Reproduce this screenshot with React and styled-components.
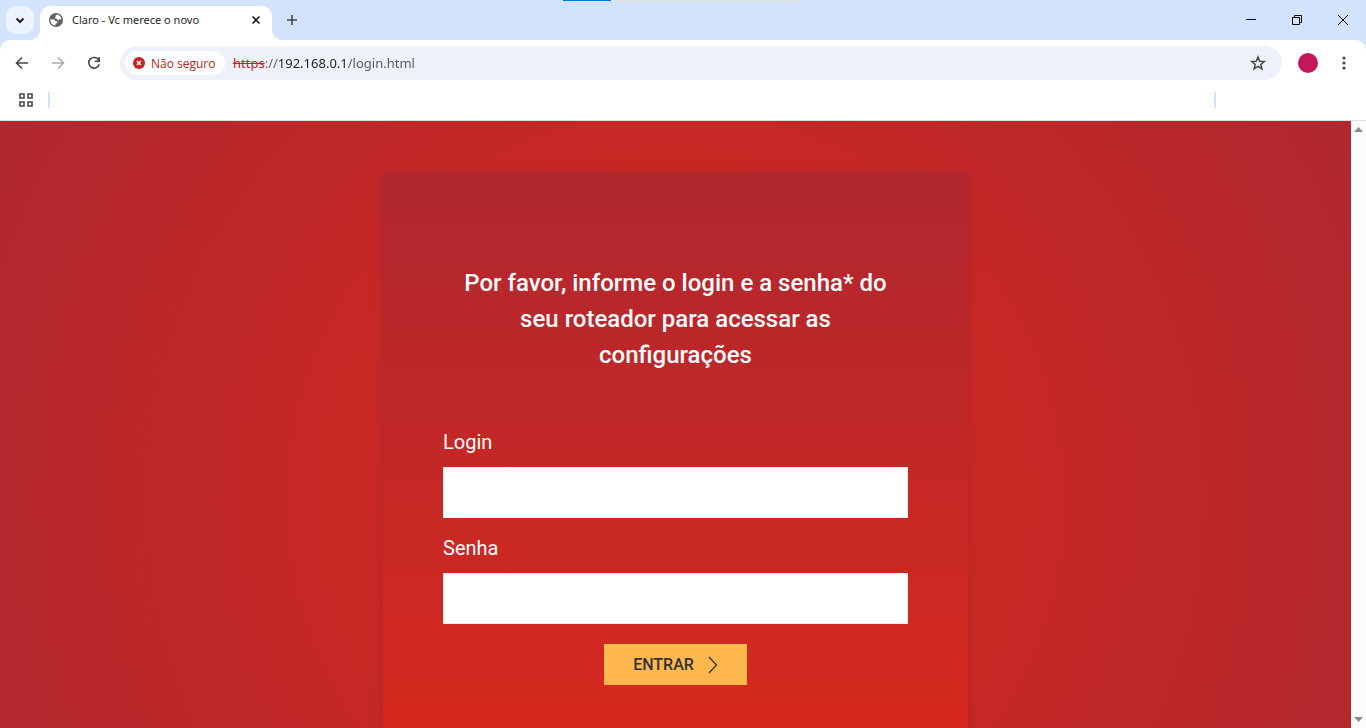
import React from 'react';
import styled, { createGlobalStyle } from 'styled-components';

const GlobalStyle = createGlobalStyle`
  * {
    box-sizing: border-box;
  }
  body {
    margin: 0;
    font-family: "Open Sans", "Noto Sans", sans-serif;
    font-size: 12px;
    color: #1f1f1f;
  }
  button {
    font: inherit;
    padding: 0;
    border: 0;
    background: none;
    cursor: pointer;
  }
  svg {
    display: block;
  }
`;

const Window = styled.div`
  height: 100vh;
  display: flex;
  flex-direction: column;
  background-color: #d3e3fd;
`;

const Progress = styled.div`
  position: absolute;
  top: 0;
  left: 0;
  right: 0;
  margin: 0 auto;
  width: 241px;
  height: 1px;
  background: linear-gradient(90deg, #0078d7 20%, #e4e4e4 20%);
`;

const TabBar = styled.div`
  display: flex;
  align-items: flex-end;
  flex: none;
  height: 40px;
  padding-left: 6px;
`;

const TabSearch = styled.button`
  display: grid;
  place-items: center;
  width: 28px;
  height: 28px;
  margin: 0 6px 6px 0;
  border-radius: 10px;
  && {
    background-color: #ecf2fe;
  }
`;

const Tab = styled.div`
  position: relative;
  display: flex;
  align-items: center;
  gap: 8px;
  width: 232px;
  height: 34px;
  padding: 0 8px 6px;
  border-radius: 10px 10px 0 0;
  background-color: #ffffff;
  &:before,
  &:after {
    content: '';
    position: absolute;
    bottom: 0;
    width: 10px;
    height: 10px;
  }
  &:before {
    left: -10px;
    background: radial-gradient(circle at 0 0, transparent 10px, #ffffff 10px);
  }
  &:after {
    right: -10px;
    background: radial-gradient(circle at 100% 0, transparent 10px, #ffffff 10px);
  }
`;

const TabTitle = styled.span`
  flex: 1;
  font-family: "Noto Sans", sans-serif;
  font-size: 11px;
  line-height: 16px;
  white-space: nowrap;
`;

const IconButton = styled.button`
  display: grid;
  place-items: center;
  flex: none;
  width: ${(props) => props.$size || 16}px;
  height: ${(props) => props.$size || 16}px;
`;

const NewTab = styled(IconButton)`
  margin: 0 0 6px 6px;
`;

const WindowControls = styled.div`
  display: flex;
  align-self: flex-start;
  margin-left: auto;
  button {
    display: grid;
    place-items: center;
    width: 46px;
    height: 40px;
  }
`;

const Toolbar = styled.div`
  display: flex;
  align-items: center;
  flex: none;
  height: 46px;
  padding: 0 12px 0 4px;
  border-radius: 10px 10px 0 0;
  background-color: #ffffff;
`;

const NavButtons = styled.div`
  display: flex;
  margin-right: 8px;
`;

const Omnibox = styled.div`
  display: flex;
  align-items: center;
  flex: 1;
  height: 34px;
  padding: 0 14px 0 5px;
  border-radius: 17px;
  background-color: #edf1fa;
`;

const Security = styled.button`
  display: flex;
  align-items: center;
  gap: 6px;
  flex: none;
  width: 100px;
  height: 24px;
  margin-right: 8px;
  border-radius: 12px;
  color: #b3261e;
  white-space: nowrap;
  && {
    padding-left: 8px;
    background-color: #ffffff;
    font-size: 12px;
    font-weight: 500;
  }
`;

const Scheme = styled.label`
  color: #c5221f;
  font-family: "Noto Sans", sans-serif;
  font-size: 13px;
  text-decoration: line-through;
`;

const Address = styled.input`
  flex: 1;
  min-width: 0;
  padding: 0;
  border: 0;
  outline: 0;
  font-family: "Noto Sans", sans-serif;
  font-size: 13px;
  color: transparent;
  background: linear-gradient(90deg, #5f6368 13px, #1f1f1f 13px 83px, #54575c 83px);
  background-clip: text;
`;

const Avatar = styled.button`
  width: 20px;
  height: 20px;
  margin: 0 16px;
  border-radius: 50%;
  && {
    background-color: #c2185b;
  }
`;

const Bookmarks = styled.div`
  display: flex;
  align-items: center;
  flex: none;
  height: 35px;
  padding: 0 150px 6px 18px;
  border-bottom: 1px solid #dedede;
  background-color: #ffffff;
`;

const Divider = styled.span`
  width: 2px;
  height: 16px;
  margin-left: ${(props) => (props.$end ? 'auto' : '14px')};
  background-color: #d3e3fd;
`;

const Viewport = styled.div`
  display: flex;
  flex: 1;
  min-height: 0;
`;

const Page = styled.main`
  flex: 1;
  overflow: hidden;
`;

const Backdrop = styled.div`
  display: flow-root;
  min-height: 760px;
  padding: 52px 20px 50px;
  background: radial-gradient(circle, #da291c, #af272f);
`;

const Card = styled.section`
  max-width: 585px;
  margin: 0 auto;
  padding: 92px 60px 100px;
  background: linear-gradient(#af272f, #da291c);
  box-shadow: 0 0 8px rgba(160, 39, 47, 0.8);
  font-family: Roboto, sans-serif;
  color: #ffffff;
`;

const Title = styled.h1`
  margin: 0 0 50px;
  font-size: 24px;
  font-weight: 500;
  line-height: 36px;
  text-align: center;
`;

const Form = styled.form`
  display: flex;
  flex-direction: column;
`;

const Label = styled.label`
  padding: 5px 0 10px;
  font-size: 20px;
  line-height: 29px;
`;

const Input = styled.input`
  width: 100%;
  height: 51px;
  margin-bottom: 11px;
  padding: 0 15px;
  border: 1px solid #eeeeee;
  outline: 0;
  font-size: 18px;
  background-color: #ffffff;
`;

const Submit = styled.button`
  display: flex;
  align-items: center;
  justify-content: center;
  gap: 14px;
  align-self: center;
  width: 143px;
  height: 41px;
  margin-top: 9px;
  color: #333333;
  && {
    background-color: #ffb84d;
    font-size: 16px;
    font-weight: 500;
  }
`;

const Scrollbar = styled.div`
  display: flex;
  flex-direction: column;
  justify-content: space-between;
  flex: none;
  width: 15px;
  background-color: #fcfcfc;
  button {
    display: grid;
    place-items: center;
    height: 17px;
  }
`;

const Icon = ({ size = 16, color = '#474747', width = 1.6, children }) => (
  <svg
    width={size}
    height={size}
    viewBox={`0 0 ${size} ${size}`}
    fill="none"
    stroke={color}
    strokeWidth={width}
    aria-hidden="true"
  >
    {children}
  </svg>
);

const Globe = () => (
  <svg width="16" height="16" viewBox="0 0 16 16" aria-hidden="true">
    <circle cx="8" cy="8" r="7" fill="#5f6368" />
    <path
      d="M9.200 2.500 7.600 3.600v1.600L6.200 6.600h2.400l1 1.400 1.300.2.600-1.200 2 .4C13.200 5 11.600 3 9.200 2.500ZM2.500 7.300 6 7.400l1.500 1.800h1.800v1.600l-1.800 1.100v1.600C4.300 13.400 2.100 10.800 2.500 7.300Z"
      fill="#ffffff"
    />
  </svg>
);

const navIcons = [
  { label: 'Voltar', color: '#474747', d: 'M14 8H2.500M8 2.500 2.500 8 8 13.500' },
  { label: 'Avançar', color: '#ababab', d: 'M2 8h11.500M8 2.500 13.500 8 8 13.500' },
];

const fields = [
  { id: 'login', label: 'Login', type: 'text' },
  { id: 'senha', label: 'Senha', type: 'password' },
];

const BrowserHeader = () => (
  <header>
    <Progress />
    <TabBar>
      <TabSearch aria-label="Pesquisar guias">
        <Icon size={10} color="#1f1f1f" width={2}>
          <path d="M1.500 3.500l3.500 3.500 3.500-3.500" />
        </Icon>
      </TabSearch>
      <Tab>
        <Globe />
        <TabTitle>Claro - Vc merece o novo</TabTitle>
        <IconButton aria-label="Fechar guia">
          <Icon size={10} color="#1f1f1f">
            <path d="M1.500 1.500l7 7M8.500 1.500l-7 7" />
          </Icon>
        </IconButton>
      </Tab>
      <NewTab $size={28} aria-label="Nova guia">
        <Icon size={12}>
          <path d="M6 1v10M1 6h10" />
        </Icon>
      </NewTab>
      <WindowControls>
        <button aria-label="Minimizar">
          <Icon size={10} color="#000000" width={1}>
            <path d="M0 4.500h10" />
          </Icon>
        </button>
        <button aria-label="Restaurar">
          <Icon size={10} color="#000000" width={1}>
            <path d="M.5 2.500h7v7h-7zM2.500 2.500v-2h7v7h-2" />
          </Icon>
        </button>
        <button aria-label="Fechar">
          <Icon size={10} color="#000000" width={1}>
            <path d="M0 0l10 10M10 0L0 10" />
          </Icon>
        </button>
      </WindowControls>
    </TabBar>
    <Toolbar>
      <NavButtons>
        {navIcons.map((item) => (
          <IconButton key={item.label} $size={36} aria-label={item.label}>
            <Icon color={item.color}>
              <path d={item.d} />
            </Icon>
          </IconButton>
        ))}
        <IconButton $size={36} aria-label="Recarregar">
          <Icon>
            <path d="M12.800 5.300A5.300 5.300 0 1 0 13.200 9.200M13.200 2v4.300H8.800" />
          </Icon>
        </IconButton>
      </NavButtons>
      <Omnibox>
        <Security>
          <Icon size={12} color="#ffffff">
            <circle cx="6" cy="6" r="6" fill="#c5221f" stroke="none" />
            <path d="M4 4l4 4M8 4L4 8" />
          </Icon>
          Não seguro
        </Security>
        <Scheme htmlFor="address">https</Scheme>
        <Address id="address" defaultValue="://192.168.0.1/login.html" />
        <IconButton $size={20} aria-label="Adicionar aos favoritos">
          <Icon width={1.5}>
            <path d="M8 2l1.700 4.200 4.500.3-3.400 2.900 1.100 4.400L8 11.400l-3.900 2.400 1.100-4.400L1.800 6.500l4.500-.3z" />
          </Icon>
        </IconButton>
      </Omnibox>
      <Avatar aria-label="Perfil" />
      <IconButton $size={20} aria-label="Menu">
        <svg width="4" height="16" fill="#474747" aria-hidden="true">
          <circle cx="2" cy="3" r="1.600" />
          <circle cx="2" cy="8" r="1.600" />
          <circle cx="2" cy="13" r="1.600" />
        </svg>
      </IconButton>
    </Toolbar>
    <Bookmarks>
      <IconButton aria-label="Aplicativos">
        <Icon>
          <path d="M2 2h4v4H2zM10 2h4v4h-4zM2 10h4v4H2zM10 10h4v4h-4z" />
        </Icon>
      </IconButton>
      <Divider />
      <Divider $end />
    </Bookmarks>
  </header>
);

const Login = () => (
  <Backdrop>
    <Card>
      <Title>
        Por favor, informe o login e a senha* do seu roteador para acessar as
        configurações
      </Title>
      <Form onSubmit={(e) => e.preventDefault()}>
        {fields.map((field) => (
          <React.Fragment key={field.id}>
            <Label htmlFor={field.id}>{field.label}</Label>
            <Input id={field.id} type={field.type} />
          </React.Fragment>
        ))}
        <Submit type="submit">
          ENTRAR
          <svg
            width="10"
            height="18"
            fill="none"
            stroke="#333333"
            strokeWidth="1.300"
            aria-hidden="true"
          >
            <path d="M1 1l7.500 8L1 17" />
          </svg>
        </Submit>
      </Form>
    </Card>
  </Backdrop>
);

export default () => {
  return (
    <Window>
      <GlobalStyle />
      <BrowserHeader />
      <Viewport>
        <Page>
          <Login />
        </Page>
        <Scrollbar>
          <button aria-label="Rolar para cima">
            <svg width="9" height="5" fill="#8b8b8b" aria-hidden="true">
              <path d="M0 5l4.500-5L9 5z" />
            </svg>
          </button>
          <button aria-label="Rolar para baixo">
            <svg width="9" height="5" fill="#8b8b8b" aria-hidden="true">
              <path d="M0 0l4.500 5L9 0z" />
            </svg>
          </button>
        </Scrollbar>
      </Viewport>
    </Window>
  );
};
